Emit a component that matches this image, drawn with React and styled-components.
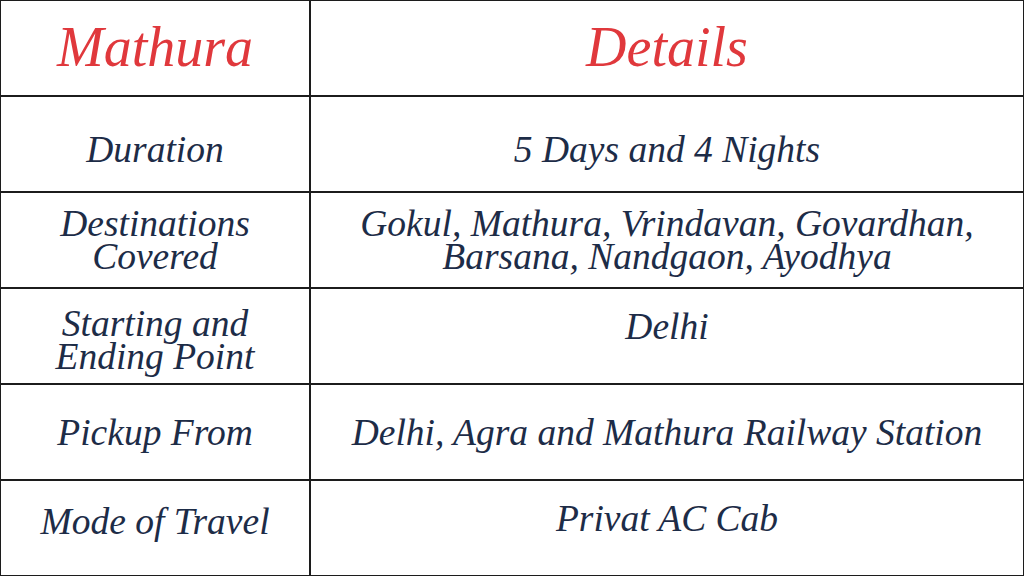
import React from 'react'
import styled, { createGlobalStyle } from 'styled-components'

const GlobalStyle = createGlobalStyle`
    html, body {
        margin: 0;
        padding: 0;
        background: #ffffff;
    }
`

const StyledTable = styled.div`
    width: 1024px;
    height: 576px;
    box-sizing: border-box;
    display: grid;
    grid-template-columns: 308px 1fr;
    grid-template-rows: repeat(6, 1fr);
    gap: 2px;
    padding: 1px;
    background: #1c1c1c;
    font-family: 'Liberation Serif', serif;
    font-style: italic;
`

const StyledCell = styled.div`
    background: #ffffff;
    display: flex;
    flex-direction: column;
    justify-content: center;
    align-items: center;
    text-align: center;
    color: ${({ $head }) => ($head ? '#e0383c' : '#1d2c47')};
    font-size: ${({ $head }) => ($head ? '56px' : '37.5px')};
    line-height: ${({ $head }) => ($head ? '1' : '33px')};
    padding-top: ${({ $shift }) => ($shift > 0 ? $shift : 0)}px;
    padding-bottom: ${({ $shift }) => ($shift < 0 ? -$shift : 0)}px;
`

const ROWS = [
    { label: ['Duration'], value: ['5 Days and 4 Nights'], shift: 10 },
    {
        label: ['Destinations', 'Covered'],
        value: ['Gokul, Mathura, Vrindavan, Govardhan,', 'Barsana, Nandgaon, Ayodhya'],
    },
    { label: ['Starting and', 'Ending Point'], value: ['Delhi'], shift: 8, valueShift: -20 },
    { label: ['Pickup From'], value: ['Delhi, Agra and Mathura Railway Station'] },
    { label: ['Mode of Travel'], value: ['Privat AC Cab'], shift: -14, valueShift: -20 },
]

const Lines = ({ lines }) => lines.map((line) => <span key={line}>{line}</span>)

export default function App() {
    return (
        <>
            <GlobalStyle />
            <StyledTable>
                <StyledCell $head $shift={-2}>Mathura</StyledCell>
                <StyledCell $head $shift={-2}>Details</StyledCell>
                {ROWS.map((row) => (
                    <React.Fragment key={row.label.join()}>
                        <StyledCell $shift={row.shift || 0}>
                            <Lines lines={row.label} />
                        </StyledCell>
                        <StyledCell $shift={row.valueShift ?? row.shift ?? 0}>
                            <Lines lines={row.value} />
                        </StyledCell>
                    </React.Fragment>
                ))}
            </StyledTable>
        </>
    )
}
